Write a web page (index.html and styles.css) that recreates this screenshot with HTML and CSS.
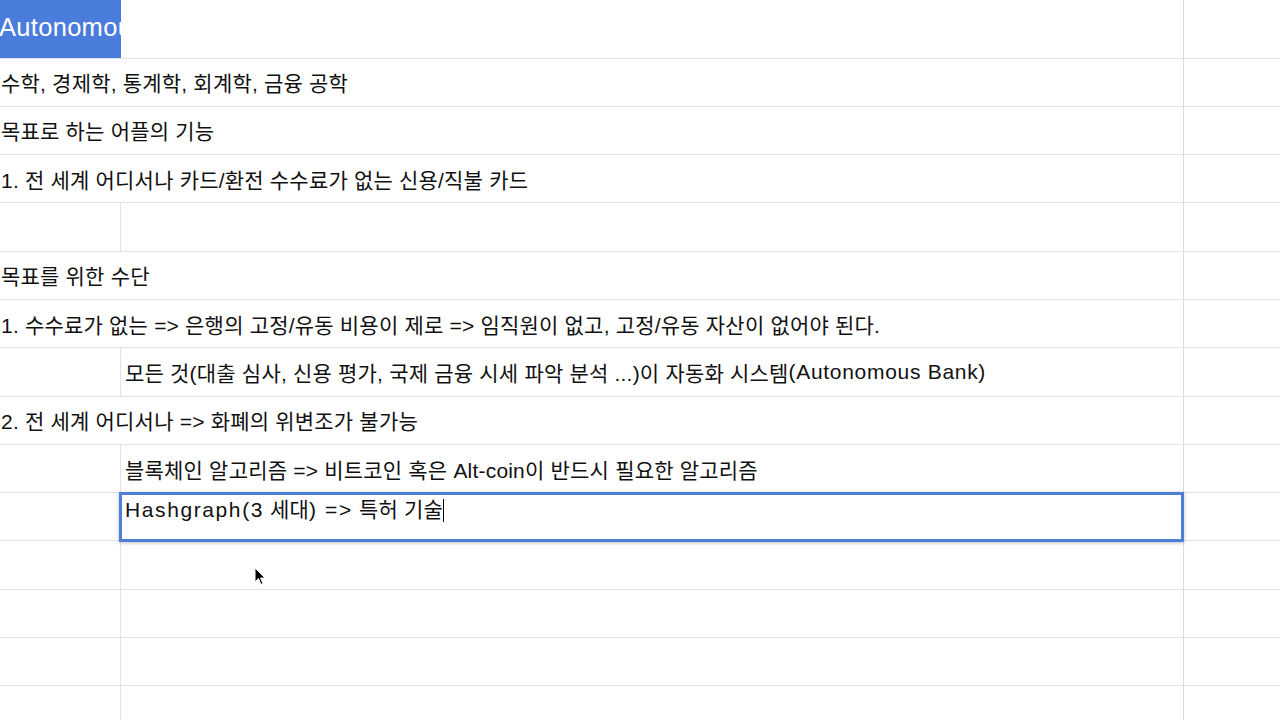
FILE: index.html
```html
<!DOCTYPE html>
<html lang="ko">
<head>
<meta charset="utf-8">
<link rel="stylesheet" href="styles.css">
</head>
<body>
<div class="sheet">
  <div class="row head">
    <div class="cell a title"><span>Autonomous Bank</span></div>
    <div class="cell b nl"></div>
    <div class="cell c"></div>
  </div>
  <div class="row">
    <div class="cell a over">수학, 경제학, 통계학, 회계학, 금융 공학</div>
    <div class="cell b nl"></div>
    <div class="cell c"></div>
  </div>
  <div class="row">
    <div class="cell a over">목표로 하는 어플의 기능</div>
    <div class="cell b nl"></div>
    <div class="cell c"></div>
  </div>
  <div class="row">
    <div class="cell a over">1. 전 세계 어디서나 카드/환전 수수료가 없는 신용/직불 카드</div>
    <div class="cell b nl"></div>
    <div class="cell c"></div>
  </div>
  <div class="row">
    <div class="cell a"></div>
    <div class="cell b"></div>
    <div class="cell c"></div>
  </div>
  <div class="row">
    <div class="cell a over">목표를 위한 수단</div>
    <div class="cell b nl"></div>
    <div class="cell c"></div>
  </div>
  <div class="row">
    <div class="cell a over">1. 수수료가 없는 =&gt; 은행의 고정/유동 비용이 제로 =&gt; 임직원이 없고, 고정/유동 자산이 없어야 된다.</div>
    <div class="cell b nl"></div>
    <div class="cell c"></div>
  </div>
  <div class="row">
    <div class="cell a"></div>
    <div class="cell b">모든 것(대출 심사, 신용 평가, 국제 금융 시세 파악 분석 ...)이 자동화 시스템<span class="lat">(Autonomous Bank)</span></div>
    <div class="cell c"></div>
  </div>
  <div class="row">
    <div class="cell a over">2. 전 세계 어디서나 =&gt; 화폐의 위변조가 불가능</div>
    <div class="cell b nl"></div>
    <div class="cell c"></div>
  </div>
  <div class="row">
    <div class="cell a"></div>
    <div class="cell b">블록체인 알고리즘 =&gt; 비트코인 혹은 Alt-coin이 반드시 필요한 알고리즘</div>
    <div class="cell c"></div>
  </div>
  <div class="row">
    <div class="cell a"></div>
    <div class="cell b"></div>
    <div class="cell c"></div>
    <div class="editor"><span class="lat">Hashgraph(3</span> 세대<span class="lat">) =&gt;</span> 특허 기술<span class="caret"></span></div>
  </div>
  <div class="row">
    <div class="cell a"></div>
    <div class="cell b"></div>
    <div class="cell c"></div>
    <svg class="pointer" width="12" height="19" viewBox="0 0 12 19"><path d="M1 1 L1 15 L4.5 11.5 L7 17.5 L9 16.6 L6.6 11 L11 11 Z" fill="#000" stroke="#fff" stroke-width="1"/></svg>
  </div>
  <div class="row">
    <div class="cell a"></div>
    <div class="cell b"></div>
    <div class="cell c"></div>
  </div>
  <div class="row">
    <div class="cell a"></div>
    <div class="cell b"></div>
    <div class="cell c"></div>
  </div>
  <div class="row">
    <div class="cell a"></div>
    <div class="cell b"></div>
    <div class="cell c"></div>
  </div>
</div>
</body>
</html>
```

FILE: styles.css
```css
html, body {
  margin: 0;
  padding: 0;
  background: #ffffff;
  overflow: hidden;
}
body {
  font-family: "Liberation Sans", "Noto Sans CJK KR", sans-serif;
  font-size: 21px;
  letter-spacing: 0.2px;
  color: #111111;
}
.sheet {
  width: 1280px;
  height: 720px;
  overflow: hidden;
}
.row {
  position: relative;
  display: grid;
  grid-template-columns: 120px 1063px 97px;
  height: 48.3px;
  box-sizing: border-box;
  border-bottom: 1px solid #e2e2e2;
}
.row.head {
  height: 58.5px;
}
.cell {
  display: flex;
  align-items: center;
  white-space: nowrap;
  min-width: 0;
}
.cell.a {
  padding-left: 1px;
}
.cell.a.over {
  overflow: visible;
  position: relative;
  z-index: 1;
}
.cell.b {
  border-left: 1px solid #e2e2e2;
  padding-left: 4px;
}
.cell.b.nl {
  border-left-color: transparent;
}
.cell.c {
  border-left: 1px solid #dcdcdc;
}
.lat {
  letter-spacing: 0.7px;
}
.title {
  background: #4a7cdc;
  color: #ffffff;
  font-size: 25.5px;
  letter-spacing: 0.3px;
  overflow: hidden;
  padding-left: 0;
  margin-left: -2px;
  margin-right: -1px;
  padding-bottom: 2px;
  box-sizing: border-box;
  position: relative;
  z-index: 1;
}
.title span {
  display: block;
}
.editor {
  position: absolute;
  left: 119px;
  top: -1px;
  width: 1065px;
  height: 50px;
  box-sizing: border-box;
  border: 3px solid #4d7ed8;
  box-shadow: 0 1px 4px rgba(0, 0, 0, 0.25);
  background: #ffffff;
  padding: 2px 0 0 3px;
  line-height: 26px;
  white-space: nowrap;
  z-index: 2;
}
.editor .lat {
  letter-spacing: 1.6px;
}
.caret {
  display: inline-block;
  width: 1px;
  height: 23px;
  background: #000;
  vertical-align: -5px;
  margin-left: 0;
}
.pointer {
  position: absolute;
  left: 254px;
  top: 26px;
  z-index: 3;
}
```
